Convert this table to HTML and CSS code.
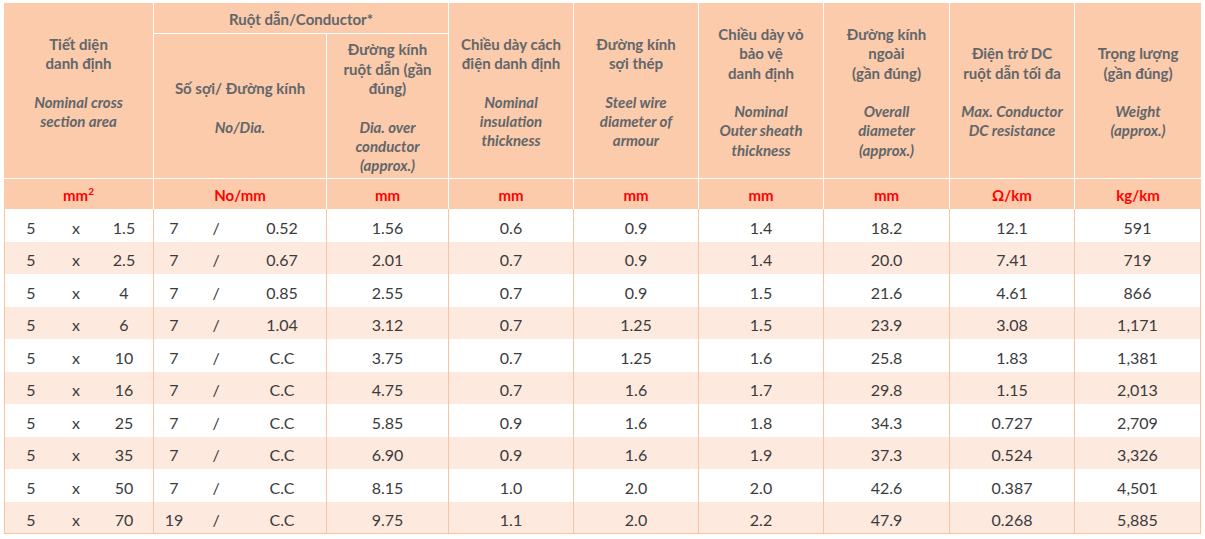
FILE: index.html
```html
<!DOCTYPE html>
<html lang="vi">
<head>
<meta charset="utf-8">
<title>Cable table</title>
<link rel="stylesheet" href="styles.css">
</head>
<body>
<table class="spec">
  <colgroup>
    <col class="c1"><col class="c2"><col class="c3"><col class="c4"><col class="c5"><col class="c6"><col class="c7"><col class="c8"><col class="c9">
  </colgroup>
  <thead>
    <tr class="h-top">
      <th rowspan="2" class="h-first">Tiết diện<br>danh định<br><br><i>Nominal cross<br>section area</i></th>
      <th colspan="2" class="h-group">Ruột dẫn/Conductor*</th>
      <th rowspan="2">Chiều dày cách<br>điện danh định<br><br><i>Nominal<br>insulation<br>thickness</i></th>
      <th rowspan="2">Đường kính<br>sợi thép<br><br><i>Steel wire<br>diameter of<br>armour</i></th>
      <th rowspan="2">Chiều dày vỏ<br>bảo vệ<br>danh định<br><br><i>Nominal<br>Outer sheath<br>thickness</i></th>
      <th rowspan="2">Đường kính<br>ngoài<br>(gần đúng)<br><br><i>Overall<br>diameter<br>(approx.)</i></th>
      <th rowspan="2">Điện trở DC<br>ruột dẫn tối đa<br><br><i>Max. Conductor<br>DC resistance</i></th>
      <th rowspan="2" class="h-last">Trọng lượng<br>(gần đúng)<br><br><i>Weight<br>(approx.)</i></th>
    </tr>
    <tr class="h-sub">
      <th>Số sợi/ Đường kính<br><br><i>No/Dia.</i></th>
      <th>Đường kính<br>ruột dẫn (gần<br>đúng)<br><br><i>Dia. over<br>conductor<br>(approx.)</i></th>
    </tr>
    <tr class="units">
      <th>mm<sup>2</sup></th>
      <th>No/mm</th>
      <th>mm</th>
      <th>mm</th>
      <th>mm</th>
      <th>mm</th>
      <th>mm</th>
      <th>Ω/km</th>
      <th class="h-last">kg/km</th>
    </tr>
  </thead>
  <tbody>
    <tr><td><div class="tri a"><span>5</span><span>x</span><span>1.5</span></div></td><td><div class="tri b"><span>7</span><span>/</span><span>0.52</span></div></td><td>1.56</td><td>0.6</td><td>0.9</td><td>1.4</td><td>18.2</td><td>12.1</td><td>591</td></tr>
    <tr><td><div class="tri a"><span>5</span><span>x</span><span>2.5</span></div></td><td><div class="tri b"><span>7</span><span>/</span><span>0.67</span></div></td><td>2.01</td><td>0.7</td><td>0.9</td><td>1.4</td><td>20.0</td><td>7.41</td><td>719</td></tr>
    <tr><td><div class="tri a"><span>5</span><span>x</span><span>4</span></div></td><td><div class="tri b"><span>7</span><span>/</span><span>0.85</span></div></td><td>2.55</td><td>0.7</td><td>0.9</td><td>1.5</td><td>21.6</td><td>4.61</td><td>866</td></tr>
    <tr><td><div class="tri a"><span>5</span><span>x</span><span>6</span></div></td><td><div class="tri b"><span>7</span><span>/</span><span>1.04</span></div></td><td>3.12</td><td>0.7</td><td>1.25</td><td>1.5</td><td>23.9</td><td>3.08</td><td>1,171</td></tr>
    <tr><td><div class="tri a"><span>5</span><span>x</span><span>10</span></div></td><td><div class="tri b"><span>7</span><span>/</span><span>C.C</span></div></td><td>3.75</td><td>0.7</td><td>1.25</td><td>1.6</td><td>25.8</td><td>1.83</td><td>1,381</td></tr>
    <tr><td><div class="tri a"><span>5</span><span>x</span><span>16</span></div></td><td><div class="tri b"><span>7</span><span>/</span><span>C.C</span></div></td><td>4.75</td><td>0.7</td><td>1.6</td><td>1.7</td><td>29.8</td><td>1.15</td><td>2,013</td></tr>
    <tr><td><div class="tri a"><span>5</span><span>x</span><span>25</span></div></td><td><div class="tri b"><span>7</span><span>/</span><span>C.C</span></div></td><td>5.85</td><td>0.9</td><td>1.6</td><td>1.8</td><td>34.3</td><td>0.727</td><td>2,709</td></tr>
    <tr><td><div class="tri a"><span>5</span><span>x</span><span>35</span></div></td><td><div class="tri b"><span>7</span><span>/</span><span>C.C</span></div></td><td>6.90</td><td>0.9</td><td>1.6</td><td>1.9</td><td>37.3</td><td>0.524</td><td>3,326</td></tr>
    <tr><td><div class="tri a"><span>5</span><span>x</span><span>50</span></div></td><td><div class="tri b"><span>7</span><span>/</span><span>C.C</span></div></td><td>8.15</td><td>1.0</td><td>2.0</td><td>2.0</td><td>42.6</td><td>0.387</td><td>4,501</td></tr>
    <tr><td><div class="tri a"><span>5</span><span>x</span><span>70</span></div></td><td><div class="tri b"><span>19</span><span>/</span><span>C.C</span></div></td><td>9.75</td><td>1.1</td><td>2.0</td><td>2.2</td><td>47.9</td><td>0.268</td><td>5,885</td></tr>
  </tbody>
</table>
</body>
</html>
```
FILE: styles.css
```css
html, body {
  margin: 0;
  padding: 0;
  background: #ffffff;
}

body {
  padding: 3px 0 0 4px;
  font-family: Lato, "Liberation Sans", sans-serif;
}

.spec {
  border-collapse: separate;
  border-spacing: 0;
  table-layout: fixed;
  width: 1197px;
}

.c1 { width: 150px; }
.c2 { width: 173px; }
.c3 { width: 122px; }
.c4 { width: 125px; }
.c5 { width: 125px; }
.c6 { width: 125px; }
.c7 { width: 126px; }
.c8 { width: 125px; }
.c9 { width: 126px; }

.spec th {
  background: #fbcbab;
  color: #62666a;
  font-size: 15px;
  font-weight: 700;
  line-height: 19.3px;
  text-align: center;
  vertical-align: middle;
  white-space: nowrap;
  padding: 4px 0 0 0;
  border-right: 1px solid #ffffff;
  border-bottom: 1px solid #ffffff;
}

.spec th i {
  font-style: italic;
}

.spec th.h-last {
  border-right: 0;
}

.h-top {
  height: 31px;
}

.h-sub {
  height: 145px;
}

.spec th.h-first {
  padding-bottom: 19px;
}

.units {
  height: 30px;
}

.spec .units th {
  color: #ff0000;
  font-size: 15px;
  border-bottom: 0;
}

.units sup {
  font-size: 10px;
  line-height: 0;
  vertical-align: 6px;
}

.spec tbody tr {
  height: 32.5px;
}

.spec td {
  padding: 4px 0 0 0;
  line-height: 19px;
  text-align: center;
  vertical-align: middle;
  font-size: 16px;
  color: #3b3b3d;
  border-right: 1px solid #f8c4a2;
  white-space: nowrap;
}

.spec td:first-child {
  border-left: 1px solid #f8c4a2;
}

.spec tbody tr:nth-child(even) td {
  background: #fde9dd;
}

.spec tbody tr:last-child td {
  border-bottom: 1px solid #f8c4a2;
}

.tri {
  display: grid;
  align-items: center;
}

.tri span {
  text-align: center;
}

.tri.a {
  grid-template-columns: 52px 38px 1fr;
}

.tri.b {
  grid-template-columns: 40px 44px 1fr;
}
```
